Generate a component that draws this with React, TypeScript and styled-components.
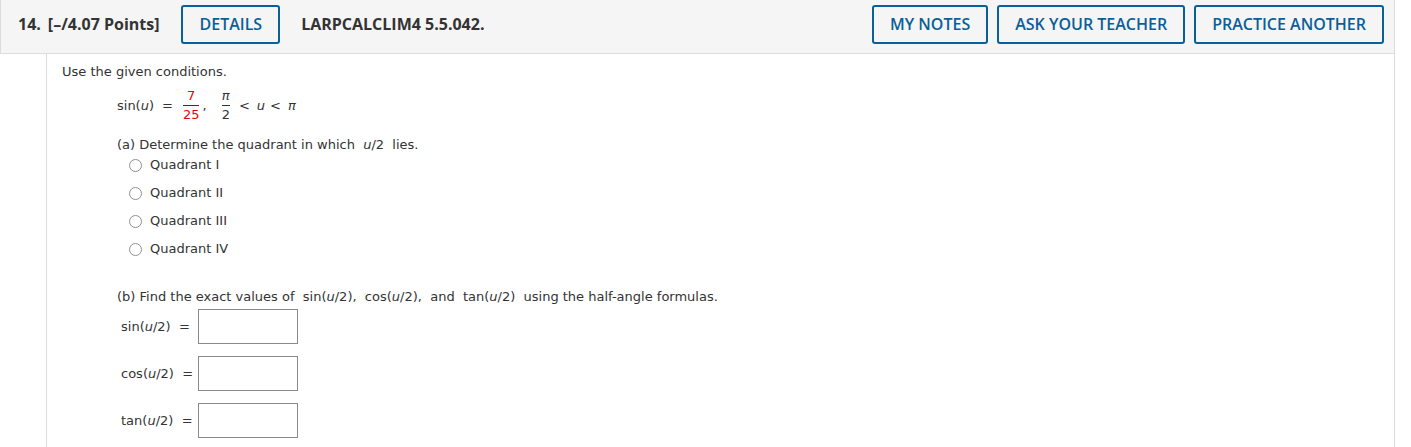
import React from "react"
import styled, { createGlobalStyle } from "styled-components"

const Global = createGlobalStyle`
  html, body {
    margin: 0;
    padding: 0;
    background: #fff;
  }
`

const Header = styled.div`
  display: flex;
  align-items: center;
  box-sizing: border-box;
  width: 1395px;
  height: 54px;
  padding: 0 10px 5px 17px;
  background: #f5f5f5;
  border: 1px solid #dcdcdc;
  border-top: none;
  font-family: "Open Sans", "Liberation Sans", sans-serif;
  font-weight: 700;
  font-size: 16px;
  color: #333;
`

const Number = styled.span`
  margin-right: 7px;
`

const Points = styled.span`
  margin-right: 22px;
`

const Code = styled.span`
  margin-left: 21px;
`

const Button = styled.button`
  box-sizing: border-box;
  height: 39px;
  padding: 0 16px;
  background: #fff0;
  border: 2px solid #0b5f98;
  border-radius: 3px;
  font-family: "Open Sans", "Liberation Sans", sans-serif;
  font-weight: 600;
  font-size: 16px;
  color: #0b5f98;
`

const RightButtons = styled.div`
  display: flex;
  gap: 9px;
  margin-left: auto;
`

const Body = styled.div`
  box-sizing: border-box;
  width: 1349px;
  margin-left: 46px;
  height: 393px;
  padding: 10px 15px 0;
  border-left: 1px solid #dcdcdc;
  border-right: 1px solid #dcdcdc;
  font-family: "DejaVu Sans", Verdana, sans-serif;
  font-size: 13px;
  color: #333;
`

const Line = styled.div`
  line-height: 16px;
  white-space: pre;
`

const Indent = styled.div<{ $top?: number }>`
  margin-left: 55px;
  margin-top: ${p => p.$top ?? 0}px;
`

const Equation = styled.div`
  display: flex;
  align-items: center;
  height: 40px;
  margin: 5px 0 0 55px;
  white-space: pre;
`

const Sym = styled.span<{ $left?: number; $right?: number }>`
  margin-left: ${p => p.$left ?? 0}px;
  margin-right: ${p => p.$right ?? 0}px;
`

const Frac = styled.span<{ $red?: boolean; $pad?: number }>`
  display: inline-flex;
  flex-direction: column;
  align-items: center;
  padding: 0 ${p => p.$pad ?? 0}px;
  color: ${p => (p.$red ? "#e00" : "#333")};
  line-height: 16px;
`

const Num = styled.span`
  padding-bottom: 1px;
`

const Bar = styled.span`
  align-self: stretch;
  height: 1px;
  background: #333;
`

const Den = styled.span`
  padding-top: 1px;
`

const Var = styled.i`
  font-family: "DejaVu Sans", Verdana, sans-serif;
`

const Options = styled.div`
  display: flex;
  flex-direction: column;
  gap: 12px;
  margin: 4px 0 0 12px;
`

const Option = styled.label`
  display: flex;
  align-items: center;
  gap: 8px;
  line-height: 16px;
`

const Radio = styled.span`
  box-sizing: border-box;
  width: 13px;
  height: 13px;
  border: 1px solid #8f8f8f;
  border-radius: 50%;
  background: #fff;
`

const Answers = styled.div`
  display: flex;
  flex-direction: column;
  gap: 12px;
  margin-top: 4px;
`

const AnswerRow = styled.div`
  display: flex;
  align-items: center;
`

const AnswerLabel = styled.span`
  box-sizing: border-box;
  width: 81px;
  padding-left: 4px;
  white-space: pre;
`

const Box = styled.span`
  box-sizing: border-box;
  width: 100px;
  height: 35px;
  border: 1px solid #8a8a8a;
  background: #fff;
`

const quadrants = ["Quadrant I", "Quadrant II", "Quadrant III", "Quadrant IV"]
const answers = ["sin", "cos", "tan"]

export default function App() {
  return <>
    <Global/>
    <Header>
      <Number>14.</Number>
      <Points>[–/4.07 Points]</Points>
      <Button>DETAILS</Button>
      <Code>LARPCALCLIM4 5.5.042.</Code>
      <RightButtons>
        <Button>MY NOTES</Button>
        <Button>ASK YOUR TEACHER</Button>
        <Button>PRACTICE ANOTHER</Button>
      </RightButtons>
    </Header>
    <Body>
      <Line>Use the given conditions.</Line>
      <Equation>
        <span>sin(<Var>u</Var>)</span>
        <Sym $left={8} $right={7}>=</Sym>
        <Frac $red $pad={3}><Num>7</Num><Bar/><Den>25</Den></Frac>
        <Sym $right={15}>,</Sym>
        <Frac><Num><Var>π</Var></Num><Bar/><Den>2</Den></Frac>
        <Sym $left={9}>&lt;</Sym>
        <Sym $left={7}><Var>u</Var></Sym>
        <Sym $left={5}>&lt;</Sym>
        <Sym $left={7}><Var>π</Var></Sym>
      </Equation>
      <Indent $top={12}>
        <Line>(a) Determine the quadrant in which  <Var>u</Var>/2  lies.</Line>
        <Options>
          {quadrants.map(q => (
            <Option key={q}><Radio/>{q}</Option>
          ))}
        </Options>
      </Indent>
      <Indent $top={32}>
        <Line>(b) Find the exact values of  sin(<Var>u</Var>/2),  cos(<Var>u</Var>/2),  and  tan(<Var>u</Var>/2)  using the half-angle formulas.</Line>
        <Answers>
          {answers.map(a => (
            <AnswerRow key={a}>
              <AnswerLabel>{a}(<Var>u</Var>/2)  =</AnswerLabel>
              <Box/>
            </AnswerRow>
          ))}
        </Answers>
      </Indent>
    </Body>
  </>
}
